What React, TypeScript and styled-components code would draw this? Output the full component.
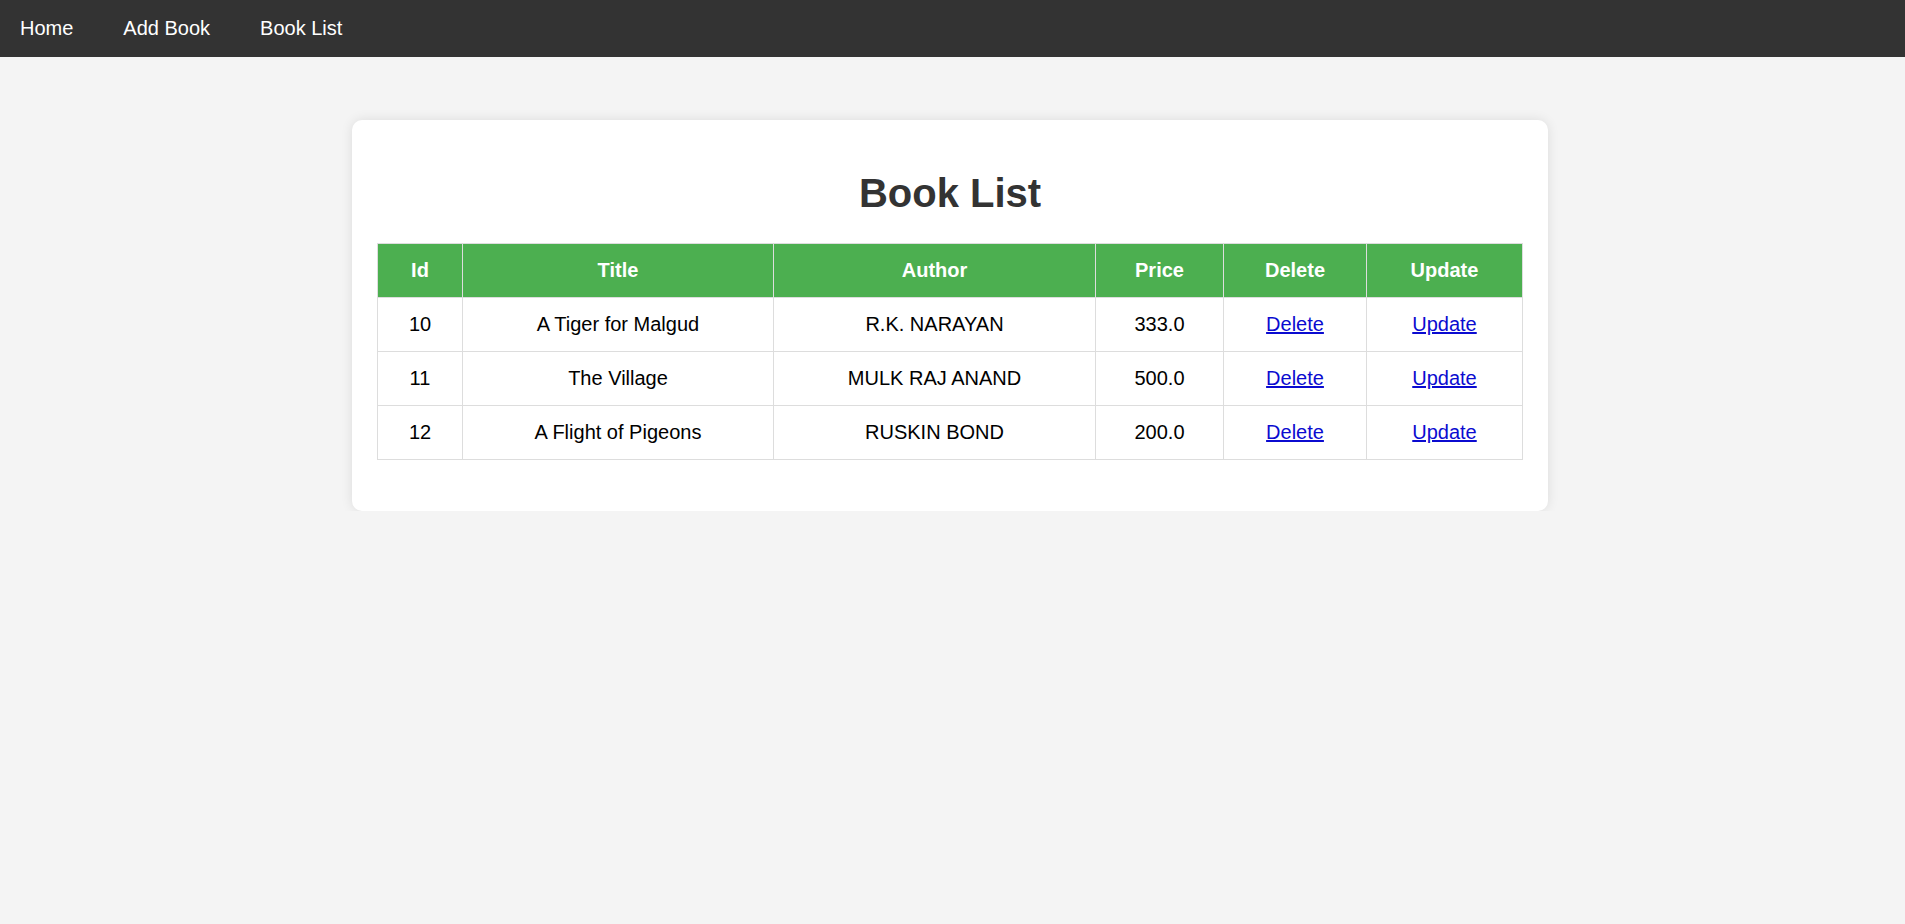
import React from "react";
import styled, { createGlobalStyle } from "styled-components";

const GlobalStyle = createGlobalStyle`
  html, body {
    margin: 0;
    padding: 0;
    background: #f4f4f4;
    font-family: "Liberation Sans", Arial, sans-serif;
  }
`;

const NavBar = styled.nav`
  height: 57px;
  background: #333333;
  display: flex;
  align-items: center;
  gap: 50px;
  padding: 0 20px;
`;

const NavLink = styled.a`
  color: #ffffff;
  text-decoration: none;
  font-size: 20px;
  line-height: 23px;
`;

const Card = styled.main`
  box-sizing: border-box;
  width: 1196px;
  margin: 63px 0 0 calc(50% - 600.5px);
  background: #ffffff;
  border-radius: 10px;
  box-shadow: 0 0 12px rgba(0, 0, 0, 0.1);
  padding: 24px 25px 51px;
`;

const Heading = styled.h1`
  margin: 26px 0 27px;
  text-align: center;
  color: #333333;
  font-size: 40px;
  line-height: 46px;
  font-weight: 700;
`;

const Table = styled.table`
  width: 100%;
  border-collapse: collapse;
  table-layout: fixed;
  font-size: 20px;
`;

const HeadCell = styled.th`
  background: #4caf50;
  color: #ffffff;
  font-weight: 700;
  border: 1px solid #dddddd;
  padding: 15px 8px;
  line-height: 23px;
  text-align: center;
`;

const Cell = styled.td`
  border: 1px solid #dddddd;
  padding: 15px 8px;
  line-height: 23px;
  text-align: center;
  color: #000000;
`;

const ActionLink = styled.a`
  color: #0b0bd0;
  text-decoration: underline;
`;

const columns = [
  { label: "Id", width: 85 },
  { label: "Title", width: 311 },
  { label: "Author", width: 322 },
  { label: "Price", width: 128 },
  { label: "Delete", width: 143 },
  { label: "Update", width: 156 },
];

const books = [
  { id: 10, title: "A Tiger for Malgud", author: "R.K. NARAYAN", price: "333.0" },
  { id: 11, title: "The Village", author: "MULK RAJ ANAND", price: "500.0" },
  { id: 12, title: "A Flight of Pigeons", author: "RUSKIN BOND", price: "200.0" },
];

export default function App() {
  return (
    <>
      <GlobalStyle />
      <NavBar>
        <NavLink href="#">Home</NavLink>
        <NavLink href="#">Add Book</NavLink>
        <NavLink href="#">Book List</NavLink>
      </NavBar>
      <Card>
        <Heading>Book List</Heading>
        <Table>
          <colgroup>
            {columns.map((c) => (
              <col key={c.label} style={{ width: c.width }} />
            ))}
          </colgroup>
          <thead>
            <tr>
              {columns.map((c) => (
                <HeadCell key={c.label}>{c.label}</HeadCell>
              ))}
            </tr>
          </thead>
          <tbody>
            {books.map((b) => (
              <tr key={b.id}>
                <Cell>{b.id}</Cell>
                <Cell>{b.title}</Cell>
                <Cell>{b.author}</Cell>
                <Cell>{b.price}</Cell>
                <Cell>
                  <ActionLink href="#">Delete</ActionLink>
                </Cell>
                <Cell>
                  <ActionLink href="#">Update</ActionLink>
                </Cell>
              </tr>
            ))}
          </tbody>
        </Table>
      </Card>
    </>
  );
}
